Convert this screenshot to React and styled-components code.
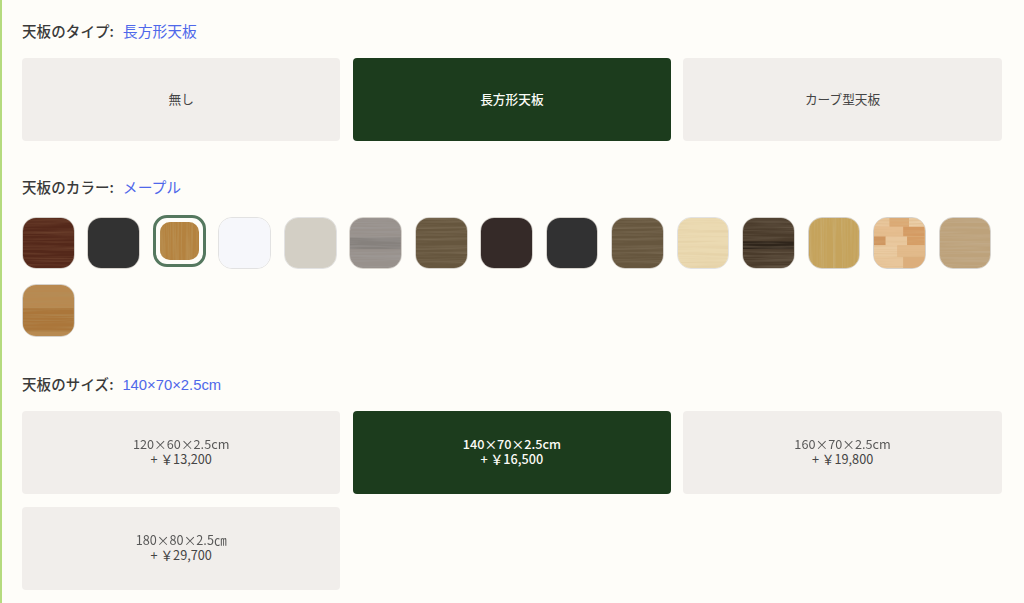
import React from "react";
import styled, { createGlobalStyle, css } from "styled-components";

const Global = createGlobalStyle`
  html, body { margin: 0; padding: 0; background: #fefdf9; }
  body { font-family: "Liberation Sans", "Noto Sans CJK JP", sans-serif; }
`;

const Page = styled.main`
  box-sizing: border-box;
  width: 1024px;
  height: 603px;
  overflow: hidden;
  border-left: 2px solid #b5db7f;
  padding: 21px 22px 0 20px;
`;

const Section = styled.section`
  margin-bottom: ${(p) => p.$mb}px;
`;

const Heading = styled.div`
  display: flex;
  align-items: baseline;
  gap: 8.8px;
  height: 20px;
  line-height: 20px;
  margin-bottom: ${(p) => p.$mb}px;
`;

const Label = styled.span`
  font-family: "Noto Sans CJK JP", sans-serif;
  font-size: 14.5px;
  font-weight: 500;
  color: #3a3a3a;
  letter-spacing: 0.1px;
`;

const Value = styled.span`
  font-size: 14.8px;
  color: #4f68ea;
  font-family: "Liberation Sans", "Noto Sans CJK JP", sans-serif;
`;

const OptionGrid = styled.div`
  display: grid;
  grid-template-columns: repeat(3, 318.4px);
  column-gap: 12.3px;
  row-gap: 13.5px;
`;

const Option = styled.button`
  height: 82.5px;
  border: 0;
  border-radius: 4px;
  padding: 0 0 2px;
  font-family: "Noto Sans CJK JP", sans-serif;
  font-size: 12.7px;
  line-height: 15px;
  text-align: center;
  background: ${(p) => (p.$active ? "#1c3c1d" : "#f1eeeb")};
  color: ${(p) => (p.$active ? "#fbfbf7" : "#444444")};
  font-weight: ${(p) => (p.$active ? 500 : 400)};
`;

const OptionLine = styled.span`
  display: block;
  ${(p) => p.$muted && "opacity: 0.88;"}
`;

const SwatchGrid = styled.div`
  display: grid;
  grid-template-columns: repeat(15, 52.6px);
  column-gap: 12.9px;
  row-gap: 15.4px;
`;

const Swatch = styled.div`
  box-sizing: border-box;
  width: 52.6px;
  height: 52.6px;
  border-radius: 14px;
  ${(p) =>
    p.$selected
      ? css`
          border: 3px solid #55785f;
          padding: 4px;
          margin-top: -2px;
        `
      : css`
          border: 1px solid ${p.$light ? "#e2e2e2" : "#d6d2cc"};
        `}
`;

const SwatchFace = styled.div`
  width: 100%;
  height: 100%;
  border-radius: ${(p) => (p.$selected ? 10 : 13)}px;
  overflow: hidden;
  background: ${(p) => p.$base};
`;

const WoodSvg = styled.svg`
  display: block;
  width: 100%;
  height: 100%;
`;

/* Wood grain drawn with SVG turbulence; bands and planks sit under the grain. */
function Wood({ id, dir = "h", ink = "0 0 0", amount = 0.5, seed = 1, bands = [], planks = [] }) {
  const freq = dir === "h" ? "0.012 0.42" : "0.42 0.012";
  const [r, g, b] = ink.split(" ");
  return (
    <WoodSvg viewBox="0 0 52 52" preserveAspectRatio="none" aria-hidden="true">
      <defs>
        <filter id={id} x="0" y="0" width="100%" height="100%">
          <feTurbulence type="fractalNoise" baseFrequency={freq} numOctaves="3" seed={seed} />
          <feColorMatrix
            values={`0 0 0 0 ${r}  0 0 0 0 ${g}  0 0 0 0 ${b}  ${amount * 3} 0 0 0 ${-amount * 1.2}`}
          />
        </filter>
      </defs>
      {planks.map(([x, y, w, h, c], i) => (
        <rect key={i} x={x} y={y} width={w} height={h} fill={c} />
      ))}
      {bands.map(([y, h, c, o], i) => (
        <rect key={i} x="0" y={y} width="52" height={h} fill={c} opacity={o ?? 1} />
      ))}
      <rect x="0" y="0" width="52" height="52" filter={`url(#${id})`} />
    </WoodSvg>
  );
}

const swatches = [
  { base: "#54281a", wood: { dir: "h", amount: 0.4, seed: 3, ink: "0.2 0.08 0.04" } },
  { base: "#323232" },
  { base: "#b4823f", selected: true, wood: { dir: "v", amount: 0.5, seed: 5, ink: "0.5 0.3 0.1" } },
  { base: "#f6f7fb", light: true },
  { base: "#d3cfc5", light: true },
  {
    base: "#98918c",
    wood: {
      dir: "h", amount: 0.6, seed: 8, ink: "0.35 0.33 0.32",
      bands: [[20, 12, "#7f7a76", 0.7]],
    },
  },
  { base: "#66563e", wood: { dir: "h", amount: 0.6, seed: 11, ink: "0.2 0.15 0.09" } },
  { base: "#352a28" },
  { base: "#313132" },
  { base: "#66563e", wood: { dir: "h", amount: 0.6, seed: 11, ink: "0.2 0.15 0.09" } },
  { base: "#ebdab2", light: true, wood: { dir: "h", amount: 0.5, seed: 14, ink: "0.75 0.6 0.35" } },
  {
    base: "#4a3b2b",
    wood: {
      dir: "h", amount: 0.5, seed: 17, ink: "0.16 0.12 0.08",
      bands: [[24, 8, "#2c241a", 0.9]],
    },
  },
  { base: "#c5a35c", wood: { dir: "v", amount: 0.5, seed: 20, ink: "0.6 0.45 0.2" } },
  {
    base: "#e3b98a",
    wood: {
      dir: "h", amount: 0.4, seed: 23, ink: "0.7 0.45 0.22",
      planks: [
        [0, 0, 16, 9, "#e9c79d"], [16, 0, 20, 9, "#dba974"], [36, 0, 16, 9, "#ecd0aa"],
        [0, 9, 30, 10, "#e6be90"], [30, 9, 22, 10, "#d49a62"],
        [0, 19, 12, 9, "#cf9660"], [12, 19, 22, 9, "#e9c89e"], [34, 19, 18, 9, "#d69e66"],
        [0, 28, 24, 12, "#eacba2"], [24, 28, 28, 12, "#e3bb8c"],
        [0, 40, 30, 12, "#e8c69b"], [30, 40, 22, 12, "#dcae7c"],
      ],
    },
  },
  { base: "#bda27b", wood: { dir: "h", amount: 0.5, seed: 26, ink: "0.55 0.42 0.27" } },
  {
    base: "#b88950",
    wood: {
      dir: "h", amount: 0.5, seed: 29, ink: "0.45 0.27 0.1",
      bands: [[24, 24, "#a87336", 0.85]],
    },
  },
];

const types = ["無し", "長方形天板", "カーブ型天板"];
const sizes = [
  ["120×60×2.5cm", "+ ￥13,200"],
  ["140×70×2.5cm", "+ ￥16,500", true],
  ["160×70×2.5cm", "+ ￥19,800"],
  ["180×80×2.5㎝", "+ ￥29,700"],
];

export default function App() {
  return (
    <Page>
      <Global />
      <Section $mb={36}>
        <Heading $mb={17}>
          <Label>天板のタイプ:</Label>
          <Value>長方形天板</Value>
        </Heading>
        <OptionGrid>
          {types.map((t, i) => (
            <Option key={t} $active={i === 1}>
              {t}
            </Option>
          ))}
        </OptionGrid>
      </Section>
      <Section $mb={37}>
        <Heading $mb={20}>
          <Label>天板のカラー:</Label>
          <Value>メープル</Value>
        </Heading>
        <SwatchGrid>
          {swatches.map((s, i) => (
            <Swatch key={i} $selected={s.selected} $light={s.light}>
              <SwatchFace $selected={s.selected} $base={s.base}>
                {s.wood && <Wood id={`wood-${i}`} {...s.wood} />}
              </SwatchFace>
            </Swatch>
          ))}
        </SwatchGrid>
      </Section>
      <Section $mb={0}>
        <Heading $mb={17}>
          <Label>天板のサイズ:</Label>
          <Value>140×70×2.5cm</Value>
        </Heading>
        <OptionGrid>
          {sizes.map(([a, b, active]) => (
            <Option key={a} $active={active}>
              <OptionLine $muted={!active}>{a}</OptionLine>
              <OptionLine>{b}</OptionLine>
            </Option>
          ))}
        </OptionGrid>
      </Section>
    </Page>
  );
}
